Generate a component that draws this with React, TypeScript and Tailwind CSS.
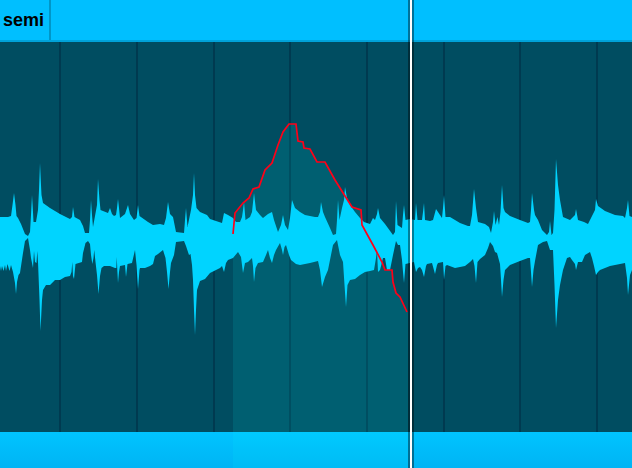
const upper: [number, number][] = [
  [0,217],[8,217],[11,216],[12.5,205],[14,193],[15.5,205],[16.5,216],[18,218],[21,224],[25,234],[28,236],[30,232],[31,215],[32,195],[33,212],[33.5,222],[36,222],[38,210],[39,190],[40,163],[41,185],[41.5,195],[43,203],[50,208],[60,214],[70,219],[72,217],[73,207],[74.5,217],[80,220],[83,226],[85,233],[89,233],[90,220],[91,200],[92,215],[93,227],[95,216],[97,205],[98,179],[99.5,200],[100.5,210],[103,211],[108,213],[110,208],[112,214],[114,216],[116,215],[117,208],[118,199],[119,208],[120,218],[125,214],[128,205],[130,214],[134,220],[136.5,218],[138,205],[139.5,216],[148,222],[153,225],[160,224],[164,225],[166,218],[168,202],[170,214],[173,217],[176,232],[184,233],[185,220],[186,208],[187.5,227],[191,210],[193,195],[194,173],[195,195],[196.5,208],[200,212],[207,215],
  [210,219],[222,223],[224,213],[228,215],[233,218],[236,222],[240,222],[242,217],[243,210],[244,202],[245.5,220],[250,217],[252,212],[254,193],[256,210],[260,215],[263,218],[268,214],[272,212],[274,220],[278,232],[281,225],[283,215],[285,225],[288,230],[290,218],[292,200],[295,208],[300,212],[305,215],[315,217],[318,217],[320,212],[321,202],[323,212],[325,217],[330,228],[333,235],[336,234],[337,220],[338,200],[339.5,220],[342,208],[344,200],[345,187],[347,198],[350,205],[355,212],[360,218],[364,222],[370,224],[373,218],[375,220],[377,214],[378,208],[380,218],[385,224],[393,235],[395,232],[396,201],[397.5,225],
  [402,228],[403,215],[404,205],[405.5,220],[410,219],[415,220],[416,203],[417.5,220],[422,220],[423,212],[424,203],[425,220],[430,221],[433,220],[436,209],[440,215],[442,218],[443,208],[444,195],[445.5,217],[450,217],[460,223],[468,226],[470,226],[472,215],[474,189],[476,208],[478,222],[485,224],[489,227],[491,233],[493,222],[494,211],[495.5,225],[497.5,217],[499,225],[500.5,212],[502,185],[503.5,208],[505,212],[510,216],[520,220],[528,223],[530,222],[531,210],[532,193],[534,210],[535,215],[538,220],[542,230],[547,235],[549,232],[550,221],[551.5,235],[553,233],[554.5,210],[556,159],[558,185],[560,200],[563,217],[570,220],[575,215],[576,209],[578,220],[584,222],[588,224],[590,220],[595,210],[596,199],[598,206],[605,211],[615,215],[623,216],[625,218],[627,208],[628,200],[629.5,216],[632,217],
];
const lower: [number, number][] = [
  [0,266],[1,271],[2,266],[3.5,271],[5,265],[6,271],[7.5,264],[9.5,271],[11,265],[13,272],[15,283],[16,294],[17,282],[18.5,275],[20,273],[23,253],[25,241],[28,238],[30,250],[31,258],[33,268],[34,251],[35,262],[36.5,263],[37.3,251],[38,262],[39.5,300],[40.5,331],[42,300],[43,290],[46,285],[50,285],[55,280],[60,280],[65,277],[70,276],[71.5,272],[72.3,262],[73,276],[74,279],[75.5,264],[82,262],[83,253],[85.5,243],[88,241],[90,244],[91,255],[92.3,264],[93.5,258],[94.2,250],[95.5,262],[97,275],[98.5,294],[100,276],[101.5,268],[104,266],[110,266],[115,268],[116.3,268],[116.8,257],[117.3,270],[118,283],[119,272],[120,266],[125,265],[126,277],[127.5,264],[132,263],[135,250],[136.5,265],[138,289],[139.5,270],[140,268],[145,268],[150,266],[153,264],[155,256],[158,254],[163,250],[165.5,258],[167,272],[168.5,289],[170,272],[171,263],[174,255],[176,242],[184,241],[186,246],[189,255],[190.5,254],[192,265],[193,280],[194,310],[195,335],[196,310],[197,290],[200,281],[205,279],
  [210,273],[220,268],[222,266],[224,272],[226,263],[228,260],[233,258],[238,252],[241,257],[243,273],[245,263],[248,262],[252,258],[253,266],[254,282],[255.5,268],[258,263],[263,262],[266,255],[268,250],[270,258],[272,263],[274,255],[276,250],[280,243],[282,250],[283,255],[284.5,247],[286,245],[289,255],[291,260],[296,264],[300,265],[310,263],[318,261],[320,270],[322,287],[325,277],[328,270],[333,245],[337,240],[340,255],[343,262],[344.5,285],[346,307],[347.5,285],[350,280],[355,279],[360,275],[365,272],[370,271],[374,270],[376,258],[377,250],[378,272],[380,270],[383,258],[385,258],[387,270],[390,270],[393,255],[396,241],[398,245],
  [400,245],[402,260],[403,272],[404,283],[405.5,264],[414,262],[416,272],[418,268],[420,267],[422,270],[424,277],[426,266],[427,264],[432,263],[435,274],[437,265],[438,263],[443,262],[444,280],[445.5,266],[447,265],[455,268],[465,266],[470,262],[473,259],[474.5,266],[476,283],[477.5,262],[480,259],[485,255],[488,248],[490,242],[493,246],[495,252],[497,253],[500,264],[501,280],[502,297],[503.5,280],[505,270],[510,265],[520,261],[528,258],[530,258],[531,272],[532,287],[533.5,270],[535,261],[538,245],[543,242],[547,241],[550,250],[553,250],[554.5,285],[556,328],[558,300],[560,285],[563,270],[567,258],[570,257],[572,260],[575,264],[576,270],[578,262],[582,262],[585,255],[590,252],[592,258],[594,266],[596,275],[598,272],[600,270],[610,266],[620,264],[625,263],[627,278],[628,295],[630,275],[632,270],
];
const red: [number, number][] = [
  [233,234],[235,213],[243,203],[249,198],[253,189],[259,187],[265,170],[272,163],[278,145],[283,132],[289,124],[296,124],[298,141],[303,142],[304,148],[310,149],[317,162],[325,162],[335,180],[345,196],[352,207],[361,210],[362,225],[373,245],[382,262],[385,270],[392,270],[393,282],[396,293],[400,297],[407,312],
];
const str = (p: [number, number][]) => p.map(([x, y]) => `${x},${y}`).join(" ");
const wave = str([...upper, ...[...lower].reverse()]);
const area = str([...red, [408, 312], [408, 468], [233, 468]]);
const cols = ["w-[61px]", "w-[77px]", "w-[77px]", "w-[76px]", "w-[77px]", "w-[77px]", "w-[76px]", "w-[77px]"];

export default function App() {
  return (
    <div className="relative flex h-[468px] w-[632px] flex-col overflow-hidden bg-[#004d61] font-['Liberation_Sans',Arial,sans-serif]">
      <div className="flex h-[42px] shrink-0 border-b-2 border-[#00a3da] bg-[#00bfff]">
        <div className="flex w-[51px] items-center border-r-2 border-[#0096c8] pl-[3px] text-[18px] font-bold text-black">semi</div>
      </div>
      <div className="flex min-h-0 flex-1">
        {cols.map((c, i) => (
          <div key={i} className={`${c} shrink-0 border-r-2 border-[#003a50]`} />
        ))}
      </div>
      <div className="h-9 shrink-0 bg-gradient-to-b from-[#00c4ff] to-[#00b4f4]" />
      <svg className="absolute inset-0" width="632" height="468" viewBox="0 0 632 468">
        <polygon points={area} fill="#00ffff" fillOpacity="0.1" />
        <polygon points={wave} fill="#00d4ff" />
        <polyline points={str(red)} fill="none" stroke="#ff0018" strokeWidth="1.7" />
      </svg>
      <div className="absolute inset-y-0 left-[408px] w-1.5 border-x-2 border-black/40 bg-white bg-clip-padding" />
    </div>
  );
}
